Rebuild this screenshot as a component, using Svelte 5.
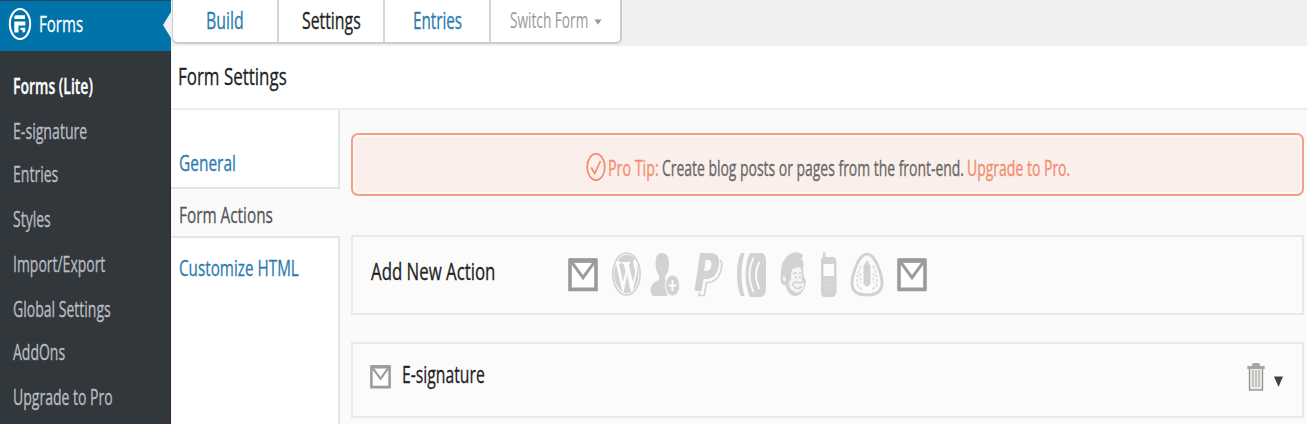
<script>
  const menu = [
    { text: 'Forms (Lite)', width: 80, row: 45, current: true },
    { text: 'E-signature', width: 74, row: 43 },
    { text: 'Entries', width: 45.5, row: 45 },
    { text: 'Styles', width: 38, row: 45 },
    { text: 'Import/Export', width: 92.5, row: 45 },
    { text: 'Global Settings', width: 97.5, row: 43 },
    { text: 'AddOns', width: 52, row: 45 },
    { text: 'Upgrade to Pro', width: 99.5, row: 44 },
  ];

  const tabs = [
    { text: 'Build', width: 38 },
    { text: 'Settings', width: 58.5, current: true },
    { text: 'Entries', width: 49 },
  ];

  // Condenses a label horizontally so that it fills the given width.
  function fit(node, width) {
    const apply = (w) => {
      node.style.transform = `scaleX(${w / node.offsetWidth})`;
    };
    apply(width);
    return { update: apply };
  }
</script>

{#snippet label(text, width)}
  <span class="label" style:width="{width}px"><span class="glyphs" use:fit={width}>{text}</span></span>
{/snippet}

{#snippet envelope(w, h)}
  <svg class="envelope" width={w} height={h} viewBox="0 0 30 33" preserveAspectRatio="none">
    <path d="M2 2.5H28V30.500H2Z" fill="#fff" stroke="#9b9b9b" stroke-width="3.600" />
    <path d="M4 4.500L15 19L26 4.500" fill="none" stroke="#9b9b9b" stroke-width="3" />
    <path d="M1 2.400H29" stroke="#9b9b9b" stroke-width="4.400" />
  </svg>
{/snippet}

<div class="page">
  <aside>
    <div class="top">
      <svg width="24" height="34" viewBox="0 0 24 34">
        <ellipse cx="12" cy="17" rx="10.200" ry="15" fill="none" stroke="#fff" stroke-width="2" />
        <path d="M8 8.200H17V12H6.300V10Q6.300 8.200 8 8.200ZM6.300 14.500H17.300V18.500H10.500V25.500H6.300ZM12.500 20.700H17.300V23.500Q17.300 25.500 15.500 25.500H14.500V23H12.500Z" fill="#fff" />
      </svg>
      {@render label('Forms', 44.5)}
      <i class="pointer"></i>
    </div>
    <nav>
      {#each menu as item}
        <a class:current={item.current} style:height="{item.row}px">{@render label(item.text, item.width)}</a>
      {/each}
    </nav>
  </aside>

  <main>
    <header>
      <div class="tabs">
        {#each tabs as tab}
          <a class:current={tab.current}>{@render label(tab.text, tab.width)}</a>
        {/each}
        <a class="switch">
          {@render label('Switch Form', 78)}
          <svg width="8" height="6" viewBox="0 0 8 6"><path d="M.5 .5H7.500L4 5.800Z" fill="#999" /></svg>
        </a>
      </div>
    </header>
    <h1>{@render label('Form Settings', 109)}</h1>

    <div class="body">
      <div class="sections">
        <a class="general">{@render label('General', 57)}</a>
        <a class="actions">{@render label('Form Actions', 94)}</a>
        <a class="custom">{@render label('Customize HTML', 120)}</a>
      </div>

      <div class="content">
        <div class="tip">
          <svg width="20" height="30" viewBox="0 0 20 30" fill="none" stroke="#f18c6d">
            <ellipse cx="10" cy="15" rx="8.800" ry="13.200" stroke-width="1.700" />
            <path d="M5.200 15.500L8.700 21.500L14.500 9" stroke-width="1.700" />
          </svg>
          <span class="accent">{@render label('Pro Tip:', 50.5)}</span>
          <span class="message">{@render label('Create blog posts or pages from the front-end.', 302)}</span>
          <a class="accent">{@render label('Upgrade to Pro.', 103.5)}</a>
        </div>

        <div class="card add">
          <h2>{@render label('Add New Action', 124.5)}</h2>
          <div class="env-first">{@render envelope(30, 34)}</div>
          <svg class="set" width="276" height="48" viewBox="610 250 276 48" fill="#d2d2d2">
            <!-- WordPress -->
            <ellipse cx="626.500" cy="274" rx="13.600" ry="21" fill="none" stroke="#d2d2d2" stroke-width="1.700" />
            <path d="M616 264L622.500 292Q616 287 614.500 278Q613.800 270 616 264ZM617.500 261Q621 255 626.500 254.800Q631.500 254.800 635 259Q632.500 261 633.500 265Q635.800 270 634.800 275L633 282L628.700 264H630V262H622V264H623.500L625.500 271L623 282L619 264H620.500V261ZM627 275L631 292Q627.500 294 623.500 292.700ZM637 264Q639.500 271 638 279Q636.500 287 632.700 290.500L636.500 275Q638 270 637 264Z" />
            <!-- User plus -->
            <path d="M662 253Q669 253 669 264Q669 271 665.500 276Q664 279 667 281L670 283Q665 289 667.500 296H654Q650.500 295.500 650.500 290Q651 283 658 280.500Q660.500 278 658.500 275Q655.500 270 655.500 263Q655.500 253 662 253Z" />
            <ellipse cx="672.500" cy="285.500" rx="7.200" ry="10.500" stroke="#fbfbfb" stroke-width="1" />
            <path d="M672.500 280V291M668.500 285.500H676.500" stroke="#fbfbfb" stroke-width="2" />
            <!-- PayPal -->
            <path d="M700 253H711.500Q720 254 719 264Q717.500 278 707 279H703.500L701.500 291H694.500ZM705.500 260L704.200 271H706.500Q711 271 711.500 264.500Q711.500 260 708.500 260Z" fill-rule="evenodd" />
            <path d="M720.500 260Q723 265 720.500 272Q717.500 281 709 282.500H706.500L704.200 295.500H699L699.500 292" fill="none" stroke="#d2d2d2" stroke-width="1.600" />
            <!-- Ringing handset -->
            <path d="M744.500 253H741Q737 260 737 274Q737 289 741 296H744.500Q741.500 286 741.500 274Q741.500 263 744.500 253ZM750 253H762Q766 254 766 260V288Q766 296 761 297H750Q745.500 287 745.500 274Q745.500 262 750 253Z" />
            <path d="M753.500 258Q745.500 274 753.500 292M759.500 262Q752.500 274 759.500 289" fill="none" stroke="#fbfbfb" stroke-width="1.800" />
            <!-- Chimp -->
            <path d="M781 274Q780.500 260 790 254Q798 250 803 255L801.500 259Q805 262 803 268Q803.500 273 804 277Q807.500 281 804.500 287Q802 296 794.500 296Q787.500 295 785.500 285Q781 286 780.600 279Q780.500 276 781 274Z" />
            <path d="M791 274Q792 267 796 268Q800 265 801.500 270L802 277L801.500 280L804 283Q804 288 801 291Q797 294 794 291.500Q790 290 788.500 283Q792 279 791 274ZM782.500 278Q784.500 274 786 279L784.500 282.500Z" fill="#f4f4f4" />
            <path d="M793 273.500L796.500 273M799 272.500L801 273.500M796 276V278.500M800 276V278M792.500 286Q793.500 281 798 282.500L803 282.500M794 286.500Q797 290.500 801.500 286.500" stroke="#d0d0d0" fill="none" stroke-width="1.700" />
            <!-- Mobile -->
            <path d="M823 253Q823 252 824 252Q825.500 252 825.500 254V257H833.500Q836.500 258 836.500 262V291Q836.500 296 833 297H824Q821 296.500 821 292V260Q821 258 823 257ZM823.500 264V276H834V264Z" fill-rule="evenodd" />
            <path d="M823.500 281H834M823.500 285.500H834M823.500 290H834M827 278V293M830.700 278V293" stroke="#e0e0e0" stroke-width=".7" />
            <!-- Badge -->
            <path d="M867 254Q872 254 876.500 263Q882 275 882 283Q882 295 867 295Q852 295 852 283Q852 275 857.500 263Q862 254 867 254Z" fill="none" stroke="#d2d2d2" stroke-width="3" />
            <path d="M863.500 266L867 260L870.500 266V284L867 287L863.500 284Z" />
            <path d="M861 266Q856.500 275 857 283Q858 288 863 289.500M873 266Q877.500 275 877 283Q876 288 871 289.500M860.500 273V283M873.500 273V283" fill="none" stroke="#dcdcdc" stroke-width="1.700" stroke-dasharray="3 1.500" />
          </svg>
          {@render envelope(30, 34)}
        </div>

        <div class="card item">
          {@render envelope(21, 24)}
          <h2>{@render label('E-signature', 83)}</h2>
          <svg class="trash" width="18" height="30" viewBox="0 0 18 30">
            <path d="M2.500 6V28H15.500V6" fill="#ececea" stroke="#999" stroke-width="1.400" />
            <path d="M6 8V25M9 8V25M12 8V25" stroke="#b9b5ae" stroke-width="1.400" />
            <path d="M.3 4H4.500L6 1H12L13.500 4H17.700V7H.3Z" fill="#a6a6a6" />
          </svg>
          <svg class="toggle" width="9" height="11" viewBox="0 0 9 11"><path d="M0 .5H9L4.500 11Z" fill="#3c454e" /></svg>
        </div>
      </div>
    </div>
  </main>
</div>

<style>
  :global(body) { margin: 0; overflow: hidden; }
  .page {
    display: flex; width: 1307px; height: 424px; overflow: hidden;
    background: #fff; font-family: "Open Sans", sans-serif; font-size: 21px; color: #222;
  }
  .label { display: inline-block; flex: none; white-space: nowrap; }
  .glyphs { display: inline-block; transform-origin: 0 50%; -webkit-text-stroke: .3px currentColor; }
  h1, h2 { margin: 0; font-weight: 500; }
  svg { display: block; flex: none; }

  aside { flex: none; width: 171px; box-sizing: border-box; background: #32373c; border-right: 1px solid #24282c; }
  .top {
    position: relative; display: flex; align-items: center; gap: 7px; height: 51px; width: 171px;
    box-sizing: border-box; padding: 0 0 4px 8px; border-top: 1px solid #23475c; background: #0073aa;
    color: #fff; line-height: 44px;
  }
  .pointer {
    position: absolute; right: 0; top: 11px;
    border: solid transparent; border-width: 13px 8px 13px 0; border-right-color: #f0f0f0;
  }
  nav { display: flex; flex-direction: column; padding: 13px 0 0 13px; color: #b9bec3; }
  nav a { line-height: 44px; }
  nav .current { color: #fff; font-weight: 600; }

  main { flex: 1; min-width: 0; display: flex; flex-direction: column; }
  header { height: 46px; background: #f0f0f0; flex: none; padding-left: 1px; }
  .tabs {
    display: flex; width: 450px; height: 44px; box-sizing: border-box; background: #fff;
    border: 2px solid #ccc; border-top: 0; border-left-width: 1px; border-radius: 0 0 6px 6px;
    color: #2d7bb0; font-size: 23px; line-height: 41px;
  }
  .tabs a { width: 106px; box-sizing: border-box; border-right: 2px solid #d5d5d5; text-align: center; }
  .tabs .label { text-align: left; }
  .tabs .current { color: #222; }
  .tabs .switch {
    display: flex; align-items: center; gap: 6px; width: auto; flex: 1; padding: 0 0 3px 19px;
    border: 0; color: #999; font-size: 21px; line-height: 36px;
  }
  .switch .glyphs, .switch :global(.glyphs) { -webkit-text-stroke-width: 0; }
  .switch svg { margin-top: 5px; }
  h1 { height: 64px; flex: none; padding-left: 7px; font-size: 23px; line-height: 61px; border-bottom: 2px solid #eee; box-sizing: border-box; }

  .body { display: flex; flex: 1; background: #fafafa; }
  .sections { flex: none; width: 169px; display: flex; flex-direction: column; color: #2d7bb0; font-size: 22.500px; }
  .sections a { box-sizing: border-box; padding-left: 8px; }
  .general { height: 79px; padding-top: 31px; background: #fff; border: solid #e5e5e5; border-width: 0 2px 2px 0; line-height: 44px; }
  .actions { height: 47px; color: #555; line-height: 52px; }
  .custom { flex: 1; background: #fff; border: solid #e5e5e5; border-width: 2px 2px 0 0; line-height: 59px; }

  .content { flex: 1; padding: 23px 3px 0 11px; display: flex; flex-direction: column; }
  .tip {
    display: flex; align-items: center; height: 63px; box-sizing: border-box; padding: 4px 0 0 233px;
    border: 2.500px solid #f4a085; border-radius: 7px; background: #fbefeb; box-shadow: inset 0 0 0 2px #fdf8f6;
    font-size: 21.500px; line-height: 50px;
  }
  .tip .label, .tip :global(.label) { margin-top: 3px; }
  .tip svg { margin-right: 2px; }
  .accent { color: #f18c6d; display: flex; }
  .message { color: #666; margin: 0 3px; display: flex; }
  .card { display: flex; align-items: center; box-sizing: border-box; border: 2px solid #e8e8e8; background: #fbfbfb; font-size: 23.500px; }
  .card h2 { font-size: inherit; }
  .add { height: 80px; margin-top: 39px; padding-left: 18px; }
  .add h2 { line-height: 70px; margin-top: -9px; }
  .env-first { margin: 0 12px 0 72.500px; }
  .set { margin: -2px 11px 0 0; }
  .item { height: 76px; margin-top: 27px; padding: 0 19px 0 17px; }
  .item h2 { margin: -12px 0 0 11px; line-height: 60px; }
  .item .envelope, .item > :global(.envelope) { margin-top: -7px; }
  .trash { margin: -6px 9px 0 auto; }
  .toggle { margin-top: 3px; }
</style>
